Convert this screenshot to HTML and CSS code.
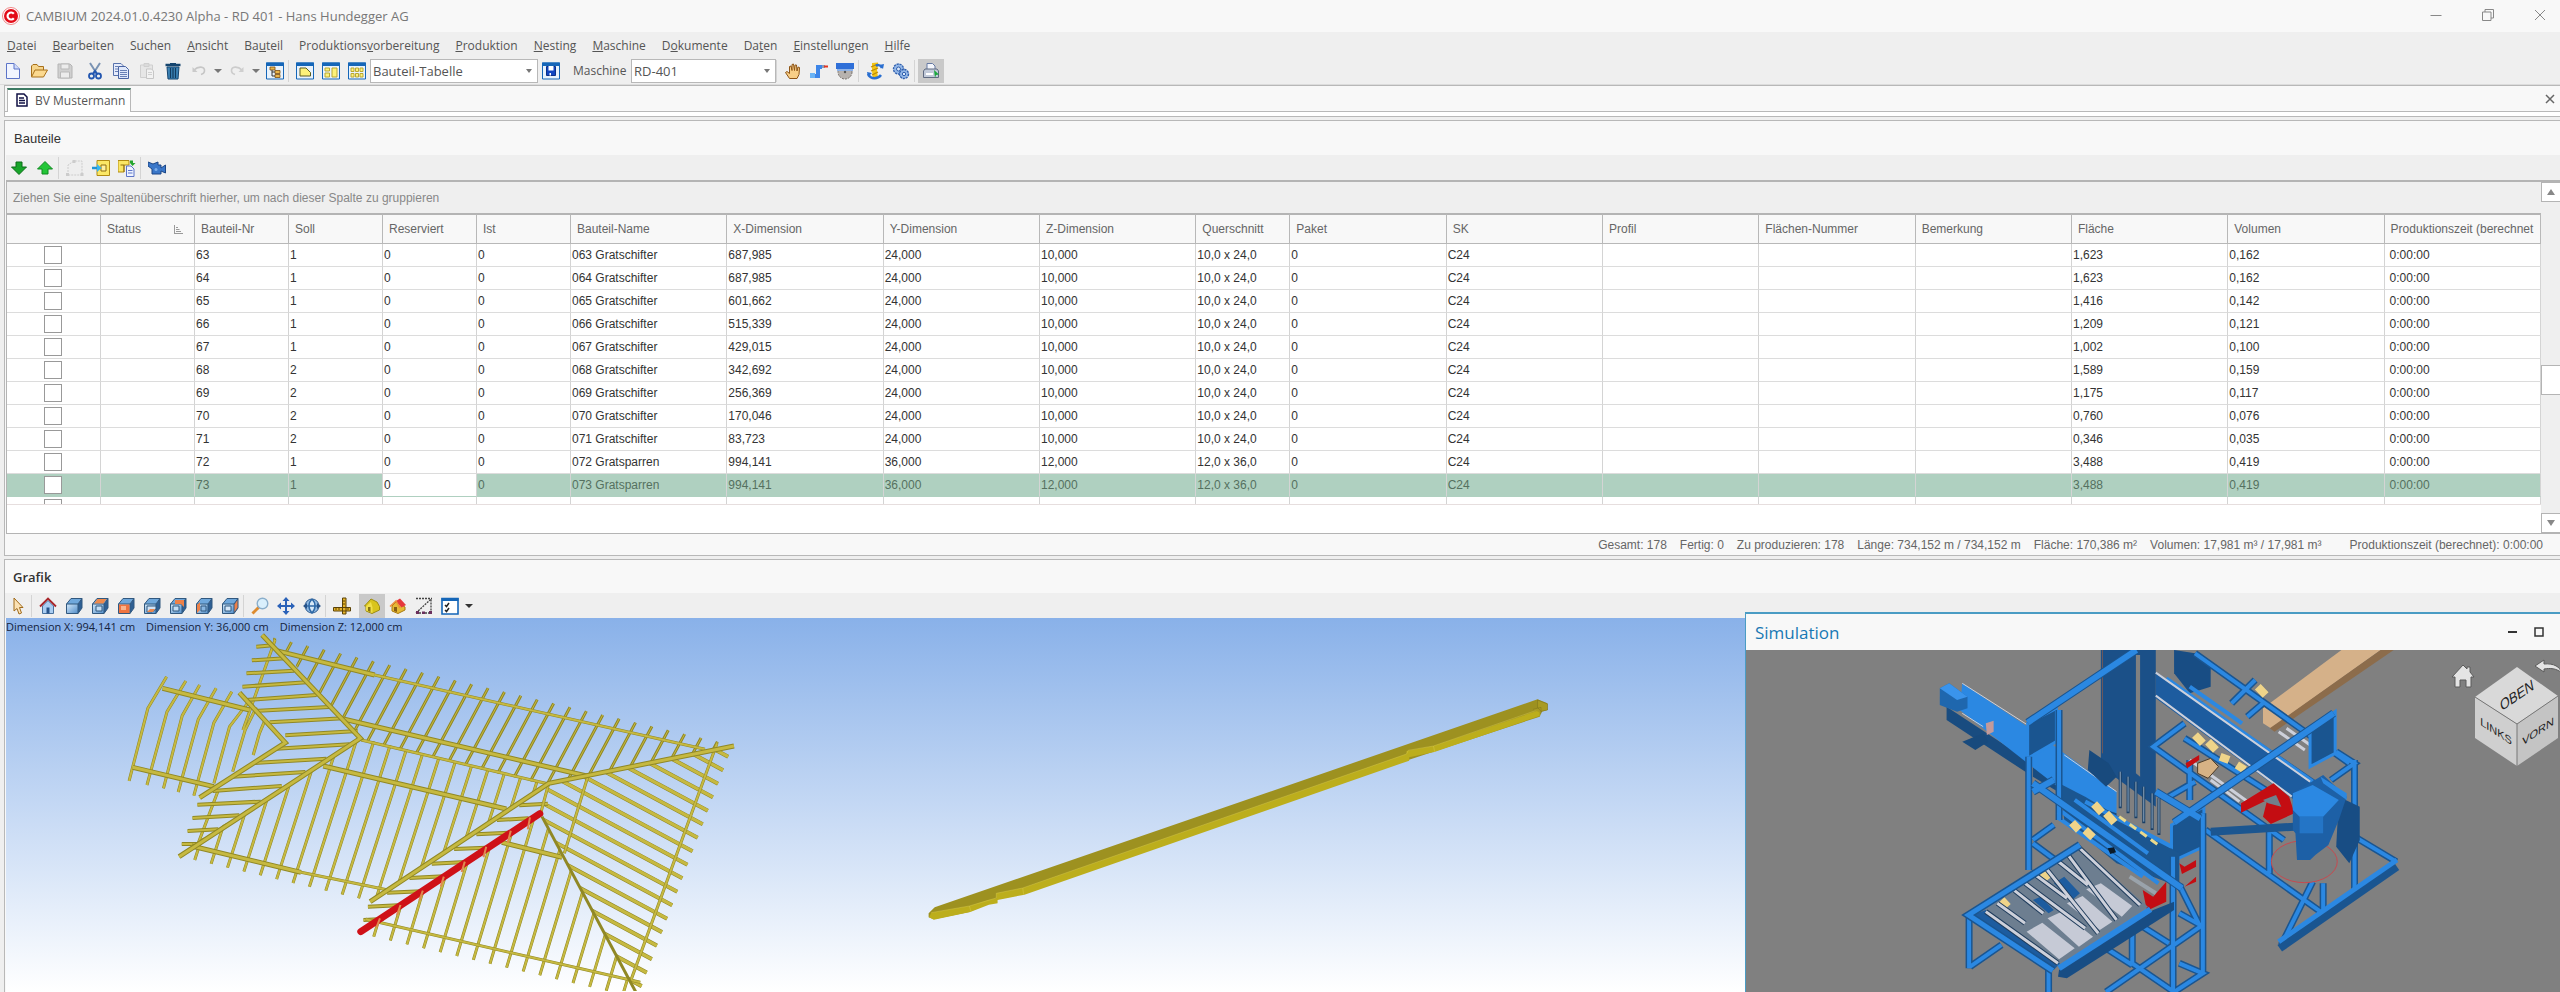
FILE: index.html
```html
<!DOCTYPE html>
<html lang="de">
<head>
  <meta charset="UTF-8" />
  <meta name="viewport" content="width=device-width, initial-scale=1.0"/>
  <title>CAMBIUM 2024.01.0.4230 Alpha - RD 401 - Hans Hundegger AG</title>
  <link rel="stylesheet" href="styles.css">
</head>
<body>
  <!-- shared icon shapes -->
  <svg class="defs" width="0" height="0" aria-hidden="true">
    <defs>
      <linearGradient id="steel" x1="0" y1="0" x2="1" y2="1"><stop offset="0" stop-color="#d4e9fa"/><stop offset="1" stop-color="#4f8cc9"/></linearGradient>
      <symbol id="cube" viewBox="0 0 18 18">
        <path d="M1.5 7 6 1.5H17L13 7z" fill="#6fa8dc"/>
        <path d="M13 7 17 1.5V11L13 16.5z" fill="#2e5f93"/>
        <path d="M1.5 7H13V16.5H1.5z" fill="url(#steel)"/>
        <path d="M1.5 7 6 1.5H17V11L13 16.5H1.5zM1.5 7H13V16.5M13 7 17 1.5" fill="none" stroke="#31587f"/>
      </symbol>
      <symbol id="win" viewBox="0 0 18 18">
        <path d="M.5 1H17.5V17H.5z" fill="#e9f3fc" stroke="#1566b8"/>
        <path d="M0 .5H18V4H0z" fill="#1566b8"/>
      </symbol>
      <symbol id="page" viewBox="0 0 18 18">
        <path d="M2.500 1.500H10L15.500 7V16.500H2.500z" fill="#f1f5ff" stroke="#5c74c8"/>
        <path d="M10 1.500V7H15.500" fill="#cfdafa" stroke="#5c74c8"/>
      </symbol>
    </defs>
  </svg>

  <div class="app">
    <header class="titlebar">
      <svg class="logo" viewBox="0 0 18 18"><circle cx="9" cy="9" r="8.500" fill="#fff" stroke="#e88"/><circle cx="9" cy="9" r="7" fill="#e30b17"/><path d="M11.800 6.800A3.500 3.500 0 1 0 11.800 11.200" fill="none" stroke="#fff" stroke-width="2.200"/></svg>
      <h1 class="app-title">CAMBIUM 2024.01.0.4230 Alpha - RD 401 - Hans Hundegger AG</h1>
      <div class="window-buttons">
        <button aria-label="Minimieren"><svg viewBox="0 0 12 12"><path d="M.5 6.500H11.500"/></svg></button>
        <button aria-label="Verkleinern"><svg viewBox="0 0 12 12"><path d="M.5 3H9V11.500H.5zM3 3V.5H11.500V9H9"/></svg></button>
        <button aria-label="Schließen"><svg viewBox="0 0 12 12"><path d="M1 1 11 11M11 1 1 11"/></svg></button>
      </div>
    </header>

    <nav class="menubar">
      <button><u>D</u>atei</button>
      <button><u>B</u>earbeiten</button>
      <button>Suchen</button>
      <button><u>A</u>nsicht</button>
      <button>Ba<u>u</u>teil</button>
      <button>Produktions<u>v</u>orbereitung</button>
      <button><u>P</u>roduktion</button>
      <button><u>N</u>esting</button>
      <button><u>M</u>aschine</button>
      <button>D<u>o</u>kumente</button>
      <button>Da<u>t</u>en</button>
      <button><u>E</u>instellungen</button>
      <button><u>H</u>ilfe</button>
    </nav>

    <div class="toolbar main-toolbar">
      <button class="tool" aria-label="Neu"><svg viewBox="0 0 18 18"><use href="#page"/></svg></button>
      <button class="tool" aria-label="Öffnen"><svg viewBox="0 0 18 18"><path d="M1.500 14.500V4L3 2.500H7L8.500 4.500H13.500V8" fill="#f6d58c" stroke="#a8701a"/><path d="M1.500 15 5 8H17.500L13.500 15z" fill="#fbd98f" stroke="#a8701a"/></svg></button>
      <button class="tool" aria-label="Speichern"><svg viewBox="0 0 18 18"><path d="M2 2H14L16 4V16H2z" fill="#d0d0d0" stroke="#b4b4b4"/><path d="M5 2H13V7H5zM4.500 10H13.500V16H4.500z" fill="#ececec" stroke="#b9b9b9"/></svg></button>
      <span class="sep"></span>
      <button class="tool" aria-label="Ausschneiden"><svg viewBox="0 0 18 18"><path d="M4 1 11 12M14 1 7 12" stroke="#7a93b3" stroke-width="2" fill="none"/><circle cx="5.500" cy="14" r="2.500" fill="none" stroke="#2256b0" stroke-width="1.800"/><circle cx="12.500" cy="14" r="2.500" fill="none" stroke="#2256b0" stroke-width="1.800"/><path d="M7 12 9 9 11 12" stroke="#2256b0" stroke-width="2" fill="none"/></svg></button>
      <button class="tool" aria-label="Kopieren"><svg viewBox="0 0 18 18"><path d="M1.500 1.500H9L12 4.500V13.500H1.500z" fill="#e6ecfb" stroke="#5873ad"/><path d="M6.500 4.500H13.500L16.500 7.500V16.500H6.500z" fill="#dfe8fb" stroke="#4964a3"/><path d="M3 4.500H6M3 7H6M3 9.500H6M8 8.500H15M8 10.500H15M8 12.500H15M8 14.500H15" stroke="#6880b5"/></svg></button>
      <button class="tool" aria-label="Einfügen"><svg viewBox="0 0 18 18"><path d="M2.500 3H14.500V15.500H2.500zM6 1.500H11V4.500H6z" fill="#e6e6e6" stroke="#cfcfcf"/><path d="M8.500 7H13.500L15.500 9V16.500H8.500z" fill="#f2f2f2" stroke="#c6c6c6"/><path d="M10 10.500H14M10 12.500H14" stroke="#d0d0d0"/></svg></button>
      <button class="tool" aria-label="Löschen"><svg viewBox="0 0 18 18"><path d="M1.500 3H16.500" stroke="#15456f" stroke-width="2.500"/><path d="M6 1.500H12" stroke="#15456f"/><path d="M3 5H15L14 17H4z" fill="#3c83b6" stroke="#15456f"/><path d="M6.500 6V16M9 6V16M11.500 6V16" stroke="#123a5d" stroke-width="1.200"/></svg></button>
      <button class="tool" aria-label="Rückgängig"><svg viewBox="0 0 18 18"><path d="M4 8C8 4 15 4 14.500 9C14.300 11 13 12 11 12.500" fill="none" stroke="#c6c6c6" stroke-width="1.600"/><path d="M2.500 5V10H7.500z" fill="#cacaca"/></svg></button>
      <button class="drop" aria-label="Rückgängig Liste"></button>
      <button class="tool" aria-label="Wiederholen"><svg viewBox="0 0 18 18"><path d="M14 8C10 4 3 4 3.500 9C3.700 11 5 12 7 12.500" fill="none" stroke="#cccccc" stroke-width="1.600"/><path d="M15.500 5V10H10.500z" fill="#cfcfcf"/></svg></button>
      <button class="drop" aria-label="Wiederholen Liste"></button>
      <button class="tool" aria-label="Baumansicht"><svg viewBox="0 0 18 18"><use href="#win"/><path d="M4 5H9V8H4zM9 8.500H14V11.500H9zM9 12.500H14V15.500H9z" fill="#e8b64c" stroke="#7a4d13" stroke-width=".8"/><path d="M6 8V14H9M6 10H9" fill="none" stroke="#333"/></svg></button>
      <span class="sep line"></span>
      <button class="tool" aria-label="Einzelansicht"><svg viewBox="0 0 18 18"><use href="#win"/><path d="M4 6H10L14.500 10.500V14H4z" fill="#fdf27a" stroke="#5d5d20"/></svg></button>
      <button class="tool" aria-label="Spaltenansicht"><svg viewBox="0 0 18 18"><use href="#win"/><path d="M3 6H7.500V9H3zM3 11H7.500V15H3zM10 6H15V15H10z" fill="#fdf27a" stroke="#b9a632"/></svg></button>
      <button class="tool" aria-label="Kachelansicht"><svg viewBox="0 0 18 18"><use href="#win"/><path d="M3 6H6V9.500H3zM7.500 6H10.500V9.500H7.500zM12 6H15V9.500H12zM3 11.500H6V15H3zM7.500 11.500H10.500V15H7.500zM12 11.500H15V15H12z" fill="#fdf27a" stroke="#b9a632"/></svg></button>
      <span class="combo combo-view"><select aria-label="Ansicht"><option>Bauteil-Tabelle</option></select></span>
      <button class="tool" aria-label="Ansicht speichern"><svg viewBox="0 0 18 18"><use href="#win"/><path d="M4.500 4.500H13.500V13.500H4.500z" fill="#1246c0" stroke="#0c2f86"/><path d="M6.500 4H11.500V8.500H6.500zM7.500 11H9V13.500H7.500z" fill="#fff"/></svg></button>
      <label class="tool-label" for="machine">Maschine</label>
      <span class="combo combo-machine"><select id="machine"><option>RD-401</option></select></span>
      <span class="sep line"></span>
      <button class="tool" aria-label="Hand"><svg viewBox="0 0 18 18"><path d="M5.500 16.500 1.500 10.500 3 9.500 5.500 11.500V4.500L7 4 8 8.500V2.500L9.500 2 10.500 8.500 11 3 12.500 3 13 9 14 5 15.500 5.500 15 12.500 13 16.500z" fill="#f8ce86" stroke="#8e5414"/></svg></button>
      <button class="tool" aria-label="Bearbeitung"><svg viewBox="0 0 18 18"><path d="M6 3H12V7H10V16H4V12H6z" fill="#3d85e8"/><path d="M0 11H5V16H0z" fill="#6ab3f5"/><path d="M12 3H15V6H12z" fill="#8b9bb5"/><path d="M14 4.500H18" stroke="#e5341f" stroke-width="2"/></svg></button>
      <button class="tool" aria-label="Säge"><svg viewBox="0 0 18 18"><circle cx="9" cy="10" r="7" fill="#b7b2ae" stroke="#77716c" stroke-dasharray="2 1"/><path d="M0 1H18V7H0z" fill="#2f6fd8"/><path d="M1 7H17V9H1z" fill="#8fb3e8"/><circle cx="9" cy="10" r="1.200" fill="#555"/></svg></button>
      <span class="sep line"></span>
      <button class="tool" aria-label="Bohrer"><svg viewBox="0 0 18 18"><path d="M6 1 12 .5 11 9 12 15 7 17 6 9z" fill="#f3c414"/><path d="M5 5 12 2M5 9 12 6M6 13 12 10" stroke="#b98b08" stroke-width="1.300"/><path d="M2 12C5 18 12 17 15 13M16 6C14 2 11 3 10 4" fill="none" stroke="#2a6fd0" stroke-width="2.500"/><path d="M13 3 18 2 17 7zM1 10 6 11 2 15z" fill="#2a6fd0"/></svg></button>
      <button class="tool" aria-label="Zahnräder"><svg viewBox="0 0 18 18"><g fill="#94b8e8" stroke="#2f5fae" stroke-width="1.400"><circle cx="6.500" cy="7" r="5" stroke-dasharray="2.200 .8"/><circle cx="12" cy="12" r="4.500" stroke-dasharray="2.200 .8"/></g><circle cx="6.500" cy="7" r="2" fill="#dbe8f8" stroke="#2f5fae"/><circle cx="12" cy="12" r="1.700" fill="#dbe8f8" stroke="#2f5fae"/></svg></button>
      <span class="sep line"></span>
      <button class="tool active" aria-label="Drucken"><svg viewBox="0 0 18 18"><path d="M5 8V1.500H10.500L13 4V8z" fill="#f4f6fb" stroke="#6579a3"/><path d="M1.500 9 3 7H15L16.500 9V15.500H1.500z" fill="#c2cad9" stroke="#5f6a80"/><path d="M4 12H11" stroke="#fff" stroke-width="2"/><path d="M12 8 17 12.500 14 13 13 16z" fill="#1aa83c"/></svg></button>
    </div>

    <div class="tabs">
      <button class="tab"><svg viewBox="0 0 12 14"><path d="M1 1H8L11 4V13H1z" fill="#fff" stroke="#111144" stroke-width="1.500"/><path d="M3 5H8M3 7.500H9M3 10H9" stroke="#111144" stroke-width="1.300"/></svg>BV Mustermann</button>
      <button class="tab-close" aria-label="Tab schließen"><svg viewBox="0 0 10 10"><path d="M1 1 9 9M9 1 1 9"/></svg></button>
    </div>

    <section class="panel parts">
      <h2 class="panel-title">Bauteile</h2>
      <div class="toolbar">
        <button class="tool" aria-label="Nach unten"><svg viewBox="0 0 18 18"><path d="M6 3H12V8H16.500L9 15.500 1.500 8H6z" fill="#18a52a" stroke="#0b6d18"/></svg></button>
        <button class="tool" aria-label="Nach oben"><svg viewBox="0 0 18 18"><path d="M6 15H12V10H16.500L9 2.500 1.500 10H6z" fill="#23c637" stroke="#0f8a20"/></svg></button>
        <span class="sep line"></span>
        <button class="tool" aria-label="Kontur"><svg viewBox="0 0 18 18"><path d="M2 16V6L8 2H16V16z" fill="#eee" stroke="#ccc" stroke-dasharray="2 1"/><path d="M0 14H3V17H0zM14.500 14H17.500V17H14.500zM6.500 1H9.500V4H6.500z" fill="#ccc"/></svg></button>
        <button class="tool" aria-label="Einfügen in Liste"><svg viewBox="0 0 18 18"><path d="M5 1.500H17.500V16.500H5z" fill="#fbe765" stroke="#b18b12"/><path d="M9 6H14V12H9z" fill="#fff1a0" stroke="#8d6d10"/><path d="M0 9H6" stroke="#1f93d6" stroke-width="2.500"/><path d="M5 5 9.500 9 5 13z" fill="#38b5ef"/></svg></button>
        <button class="tool" aria-label="Übertragen"><svg viewBox="0 0 18 18"><path d="M0 1.500H11V6H6V13H0z" fill="#fbe765" stroke="#b18b12"/><path d="M2.500 6H6V13" fill="none" stroke="#8d6d10"/><path d="M8.500 7H13L16 10V17.500H8.500z" fill="#eef3ff" stroke="#5c74c8"/><path d="M10 11.500H14.500M10 14H14.500" stroke="#5c74c8"/><path d="M12 1.500H15V4H17.500L14.500 7 12 4z" fill="#24a52f"/></svg></button>
        <span class="sep line"></span>
        <button class="tool" aria-label="Kamera"><svg viewBox="0 0 18 18"><path d="M0 3 5 5 10 3V6H13V9L17.500 6V14L13 12V15H4V10L0 7z" fill="#3a77c9" stroke="#1c4787"/><circle cx="8" cy="10.500" r="1.500" fill="#7badea"/></svg></button>
      </div>

      <div class="grid">
        <div class="grid-main">
          <div class="group-hint">Ziehen Sie eine Spaltenüberschrift hierher, um nach dieser Spalte zu gruppieren</div>
          <div class="grid-clip">
            <table>
              <colgroup>
                <col class="narrow" span="6"><col span="4"><col class="narrow"><col span="8">
              </colgroup>
              <thead>
                <tr>
                  <th></th>
                  <th><span class="sorted">Status <svg viewBox="0 0 9 9"><path d="M.5 0V8.500M0 8.500H9M2 6.500H7M2 4.500H5.500M2 2.500H4"/></svg></span></th>
                  <th>Bauteil-Nr</th><th>Soll</th><th>Reserviert</th><th>Ist</th><th>Bauteil-Name</th><th>X-Dimension</th><th>Y-Dimension</th><th>Z-Dimension</th><th>Querschnitt</th><th>Paket</th><th>SK</th><th>Profil</th><th>Flächen-Nummer</th><th>Bemerkung</th><th>Fläche</th><th>Volumen</th><th>Produktionszeit (berechnet</th>
                </tr>
              </thead>
              <tbody>
                <tr><td class="check"><input type="checkbox" aria-label="Bauteil 63"></td><td></td><td>63</td><td>1</td><td>0</td><td>0</td><td>063 Gratschifter</td><td>687,985</td><td>24,000</td><td>10,000</td><td>10,0 x 24,0</td><td>0</td><td>C24</td><td></td><td></td><td></td><td>1,623</td><td>0,162</td><td class="time">0:00:00</td></tr>
                <tr><td class="check"><input type="checkbox" aria-label="Bauteil 64"></td><td></td><td>64</td><td>1</td><td>0</td><td>0</td><td>064 Gratschifter</td><td>687,985</td><td>24,000</td><td>10,000</td><td>10,0 x 24,0</td><td>0</td><td>C24</td><td></td><td></td><td></td><td>1,623</td><td>0,162</td><td class="time">0:00:00</td></tr>
                <tr><td class="check"><input type="checkbox" aria-label="Bauteil 65"></td><td></td><td>65</td><td>1</td><td>0</td><td>0</td><td>065 Gratschifter</td><td>601,662</td><td>24,000</td><td>10,000</td><td>10,0 x 24,0</td><td>0</td><td>C24</td><td></td><td></td><td></td><td>1,416</td><td>0,142</td><td class="time">0:00:00</td></tr>
                <tr><td class="check"><input type="checkbox" aria-label="Bauteil 66"></td><td></td><td>66</td><td>1</td><td>0</td><td>0</td><td>066 Gratschifter</td><td>515,339</td><td>24,000</td><td>10,000</td><td>10,0 x 24,0</td><td>0</td><td>C24</td><td></td><td></td><td></td><td>1,209</td><td>0,121</td><td class="time">0:00:00</td></tr>
                <tr><td class="check"><input type="checkbox" aria-label="Bauteil 67"></td><td></td><td>67</td><td>1</td><td>0</td><td>0</td><td>067 Gratschifter</td><td>429,015</td><td>24,000</td><td>10,000</td><td>10,0 x 24,0</td><td>0</td><td>C24</td><td></td><td></td><td></td><td>1,002</td><td>0,100</td><td class="time">0:00:00</td></tr>
                <tr><td class="check"><input type="checkbox" aria-label="Bauteil 68"></td><td></td><td>68</td><td>2</td><td>0</td><td>0</td><td>068 Gratschifter</td><td>342,692</td><td>24,000</td><td>10,000</td><td>10,0 x 24,0</td><td>0</td><td>C24</td><td></td><td></td><td></td><td>1,589</td><td>0,159</td><td class="time">0:00:00</td></tr>
                <tr><td class="check"><input type="checkbox" aria-label="Bauteil 69"></td><td></td><td>69</td><td>2</td><td>0</td><td>0</td><td>069 Gratschifter</td><td>256,369</td><td>24,000</td><td>10,000</td><td>10,0 x 24,0</td><td>0</td><td>C24</td><td></td><td></td><td></td><td>1,175</td><td>0,117</td><td class="time">0:00:00</td></tr>
                <tr><td class="check"><input type="checkbox" aria-label="Bauteil 70"></td><td></td><td>70</td><td>2</td><td>0</td><td>0</td><td>070 Gratschifter</td><td>170,046</td><td>24,000</td><td>10,000</td><td>10,0 x 24,0</td><td>0</td><td>C24</td><td></td><td></td><td></td><td>0,760</td><td>0,076</td><td class="time">0:00:00</td></tr>
                <tr><td class="check"><input type="checkbox" aria-label="Bauteil 71"></td><td></td><td>71</td><td>2</td><td>0</td><td>0</td><td>071 Gratschifter</td><td>83,723</td><td>24,000</td><td>10,000</td><td>10,0 x 24,0</td><td>0</td><td>C24</td><td></td><td></td><td></td><td>0,346</td><td>0,035</td><td class="time">0:00:00</td></tr>
                <tr><td class="check"><input type="checkbox" aria-label="Bauteil 72"></td><td></td><td>72</td><td>1</td><td>0</td><td>0</td><td>072 Gratsparren</td><td>994,141</td><td>36,000</td><td>12,000</td><td>12,0 x 36,0</td><td>0</td><td>C24</td><td></td><td></td><td></td><td>3,488</td><td>0,419</td><td class="time">0:00:00</td></tr>
                <tr class="selected"><td class="check"><input type="checkbox" aria-label="Bauteil 73"></td><td></td><td>73</td><td>1</td><td class="focus">0</td><td>0</td><td>073 Gratsparren</td><td>994,141</td><td>36,000</td><td>12,000</td><td>12,0 x 36,0</td><td>0</td><td>C24</td><td></td><td></td><td></td><td>3,488</td><td>0,419</td><td class="time">0:00:00</td></tr>
                <tr><td class="check"><input type="checkbox" aria-label="Bauteil 74"></td><td></td><td></td><td></td><td></td><td></td><td></td><td></td><td></td><td></td><td></td><td></td><td></td><td></td><td></td><td></td><td></td><td></td><td></td></tr>
              </tbody>
            </table>
          </div>
        </div>
        <div class="scrollbar">
          <button class="scroll-up" aria-label="Nach oben blättern"></button>
          <div class="thumb"></div>
          <button class="scroll-down" aria-label="Nach unten blättern"></button>
        </div>
      </div>

      <footer class="totals">
        <span>Gesamt: 178</span>
        <span>Fertig: 0</span>
        <span>Zu produzieren: 178</span>
        <span>Länge: 734,152 m / 734,152 m</span>
        <span>Fläche: 170,386 m²</span>
        <span>Volumen: 17,981 m³ / 17,981 m³</span>
        <span class="total-time">Produktionszeit (berechnet): 0:00:00</span>
      </footer>
    </section>

    <section class="panel graphics">
      <h2 class="panel-title bold">Grafik</h2>
      <div class="toolbar">
        <button class="tool" aria-label="Auswahl"><svg viewBox="0 0 18 18"><path d="M5 1V14L8 11.500 10 17 12.500 16 10.500 10.500H14z" fill="#fbe2b5" stroke="#a06a1a"/></svg></button>
        <span class="sep line"></span>
        <button class="tool" aria-label="Startansicht"><svg viewBox="0 0 18 18"><path d="M3.500 9 9 3.500 14.500 9V16.500H3.500z" fill="#a9cdf2" stroke="#47709d"/><path d="M1 9.500 9 1.500 17 9.500" fill="none" stroke="#a8262b" stroke-width="1.800"/><path d="M7.500 10.500H10.500V16.500H7.500z" fill="#27538a"/></svg></button>
        <button class="tool" aria-label="Isometrie"><svg viewBox="0 0 18 18"><use href="#cube"/></svg></button>
        <button class="tool" aria-label="Oben"><svg viewBox="0 0 18 18"><use href="#cube"/><path d="M3 6.500 6.500 2H15.500L12.500 6.500z" fill="#ef8a4c"/><path d="M5 9H11V14H5z" fill="#c5def5" stroke="#31587f"/></svg></button>
        <button class="tool" aria-label="Vorne"><svg viewBox="0 0 18 18"><use href="#cube"/><path d="M2 7.500H12.500V16H2z" fill="#ef7440"/><path d="M4 9H9V13H4z" fill="#f8b48e"/></svg></button>
        <button class="tool" aria-label="Unten"><svg viewBox="0 0 18 18"><use href="#cube"/><path d="M4 9H13V12L9 15H4z" fill="#cfe3f7" stroke="#31587f"/><path d="M4 15 7 12H12L10 15z" fill="#e98850"/></svg></button>
        <button class="tool" aria-label="Hinten"><svg viewBox="0 0 18 18"><use href="#cube"/><path d="M6 3H15V10L12 7H6z" fill="#ee8148"/><path d="M4 9H10V14H4z" fill="#c5def5" stroke="#31587f"/></svg></button>
        <button class="tool" aria-label="Links"><svg viewBox="0 0 18 18"><use href="#cube"/><path d="M2 8 5 5V13L2 16z" fill="#ee8148"/><path d="M6 9H11V14H6z" fill="#89b7e2" stroke="#31587f"/></svg></button>
        <button class="tool" aria-label="Rechts"><svg viewBox="0 0 18 18"><use href="#cube"/><path d="M13.500 7.500 16.500 3V10.500L13.500 15z" fill="#ee8148"/><path d="M4 9H10V14H4z" fill="#d5e7f8" stroke="#31587f"/></svg></button>
        <span class="sep line"></span>
        <button class="tool" aria-label="Zoom"><svg viewBox="0 0 18 18"><path d="M8 10 1.500 16.500" stroke="#dd8b2f" stroke-width="3"/><circle cx="11.500" cy="6.500" r="5.300" fill="#d9effc" stroke="#8aaecb" stroke-width="1.400"/></svg></button>
        <button class="tool" aria-label="Verschieben"><svg viewBox="0 0 18 18"><path d="M9 2V16M2 9H16" stroke="#2b62b8" stroke-width="2"/><path d="M9 0 12.500 4H5.500zM9 18 12.500 14H5.500zM0 9 4 5.500V12.500zM18 9 14 5.500V12.500z" fill="#2b62b8"/></svg></button>
        <button class="tool" aria-label="Drehen"><svg viewBox="0 0 18 18"><circle cx="9" cy="9" r="7" fill="#8fb8e0" stroke="#2f5d92"/><path d="M9 2C5 6 5 12 9 16C13 12 13 6 9 2M2 9H16" fill="#d8e9f7" stroke="#2f6aa8" stroke-width="1.500"/><path d="M0 9 4 6V12zM18 9 14 6V12z" fill="#27538a"/></svg></button>
        <span class="sep line"></span>
        <button class="tool" aria-label="Messen"><svg viewBox="0 0 18 18"><path d="M9.500 1H13V17H9.500zM.5 10.500H17.500V14H.5z" fill="#e7b529" stroke="#5a4208"/><path d="M3 11V13M6 11V13M15 11V13M10 4H12M10 7H12" stroke="#5a4208"/></svg></button>
        <span class="sep"></span>
        <button class="tool active" aria-label="Bauteil anzeigen"><svg viewBox="0 0 18 18"><path d="M1.500 9 8 2 14 5 16.500 9.500V13L9 16.500 3 14V9z" fill="#d9c41c" stroke="#9d8c12"/><path d="M3 9.500 8 5 9.500 10.500V16L3 13.500z" fill="#f0df49"/><path d="M5 10H7.500V15L5 14z" fill="#857312"/></svg></button>
        <button class="tool" aria-label="Dach anzeigen"><svg viewBox="0 0 18 18"><path d="M3 9 7 5 16 10V13L9 16.500 3 14z" fill="#e5ba35" stroke="#a97b12"/><path d="M7 4 11 1.500 17 8 12.500 10.500z" fill="#e5383c"/><path d="M1 9.500 7 4 11 11" fill="none" stroke="#ef8f3b" stroke-width="1.500"/><path d="M5 10H8V15L5 14z" fill="#865d12"/></svg></button>
        <button class="tool" aria-label="Punkte"><svg viewBox="0 0 18 18"><path d="M1 1.500H17M1 16H17M1 16 16 2V16" fill="none" stroke="#444" stroke-width="1.300" stroke-dasharray="2 1"/><path d="M1 14H4V17H1zM14 14H17V17H14zM7 14.500H10V17H7z" fill="#6b2f5c"/></svg></button>
        <button class="tool" aria-label="Optionen"><svg viewBox="0 0 18 18"><path d="M1 1.500H17V17H1z" fill="#fff" stroke="#1566b8" stroke-width="1.600"/><path d="M.5 1H17.500V4H.5z" fill="#1566b8"/><path d="M4 8 5.500 9.500 8 6M4 13 5.500 14.500 8 11" fill="none" stroke="#222" stroke-width="1.500"/></svg></button>
        <button class="drop dark-drop" aria-label="Weitere Optionen"></button>
      </div>

      <div class="viewer">
        <p class="dimensions"><span>Dimension X: 994,141 cm</span><span>Dimension Y: 36,000 cm</span><span>Dimension Z: 12,000 cm</span></p>
        <svg class="scene" viewBox="0 0 2554 373" preserveAspectRatio="xMinYMin meet">
          <defs>
            <clipPath id="north"><path d="M408 20 1500 330 1465 378 1135 468 1045 495 628 360z"/></clipPath>
            <clipPath id="south"><path d="M560 410 628 355 1045 490 650 845 640 870 200 760 222 700z"/></clipPath>
            <clipPath id="dormer"><path d="M627 937 1032 578 1245 1116H627z"/></clipPath>
            <clipPath id="east"><path d="M1465 378 1050 492 1035 590 1245 1116H1500V378z"/></clipPath>
            <path id="jacks" d="M395 80 432 76M385 121 460 115M373 160 480 152M364 200 507 187M372 240 530 225M390 273 558 261M425 307 590 295M460 346 622 333M440 386 604 373M390 429 552 416M342 470 505 456M297 513 452 498M263 554 405 545M252 594 357 586M241 633 310 628M228 672 268 672M635 900 680 897M645 860 712 856M688 818 765 814M738 774 815 769M788 731 865 726M838 687 910 683M888 643 960 638M934 600 1005 595M984 556 1048 551"/>
            <path id="small" d="M194 170 152 265 110 483M237 183 195 275 150 495M268 195 229 287 187 505M305 205 265 298 220 516M340 215 300 308 255 527M378 245 335 320 300 490M395 262 370 330 342 455M413 305 402 340 388 405M437 60 365 330M310 510 262 680"/>
            <path id="thin" d="M660 165 1400 388M630 360 1050 492M495 757 690 810M640 898 1255 1087M1427 370 1233 1085M1138 468 1085 700M1050 490 1030 590"/>
            <path id="thick" d="M440 92 660 165M590 297 1135 468M545 438 955 567M250 678 495 757M185 205 380 270M118 442 300 500M945 667 1080 712"/>
            <path id="hips" d="M408 45 628 355 222 710M357 218 460 368 268 533M1465 378 1050 490 650 845"/>
          </defs>
          <g class="roof" transform="translate(74 2) scale(.4464 .3333)">
            <g id="rafters"></g>
            <use href="#small" class="dark w3"/><use href="#small" class="light w2"/>
            <use href="#jacks" class="dark w4"/><use href="#jacks" class="light w2"/>
            <use href="#thin" class="dark w3"/><use href="#thin" class="light w2"/>
            <use href="#thick" class="dark w5"/><use href="#thick" class="light w3"/>
            <use href="#hips" class="dark w5"/><use href="#hips" class="light w3"/>
            <path class="dark w3" d="M1035 590 1245 1116"/>
            <path class="red" d="M1030 581 629 935"/>
            <path class="ticks w2" d="M1008 592 1003 628M965 632 958 668M910 680 904 712M862 725 855 756M815 770 808 800M768 812 760 842M718 855 710 885M672 895 664 922"/>
          </g>
          <g class="beam" transform="translate(894 52) scale(.4337 .3333)">
            <path fill="#9d9120" d="M66 730 80 712 1470 88 1493 100V120L1480 125 1475 140 1230 245 1172 270 285 672 225 688 160 726 78 748 66 742z"/>
            <path fill="#bcae1c" d="M72 728 160 708 203 690 222 685V670L283 654 1168 252V243L1230 228 1475 120V138L1232 246 1174 262V272L287 674 225 690V700L205 704 162 726 78 749 67 742z"/>
            <path fill="none" stroke="#ddd05a" d="M72 728 160 708 222 684V670L283 654 1168 252 1172 241 1230 228 1470 120M160 708 164 726M283 654 285 674M1230 228 1233 246"/>
            <path fill="#a99b22" stroke="#6f661a" d="M1470 90 1493 102V120L1478 124 1470 112zM1460 118 1478 112V130"/>
          </g>
        </svg>
      </div>

      <div class="simulation">
        <div class="sim-title">
          <h2>Simulation</h2>
          <button aria-label="Simulation minimieren"><svg viewBox="0 0 10 10"><path d="M0 5H9" stroke-width="2"/></svg></button>
          <button aria-label="Simulation maximieren"><svg viewBox="0 0 10 10"><path d="M1 1H9V9H1z" stroke-width="1.500"/></svg></button>
        </div>
        <svg class="sim-view" viewBox="0 0 814 342" preserveAspectRatio="xMinYMin meet">
          <defs>
            <path id="back-frame" d="M870 160 1165 490M850 370 790 440 1040 720M850 415 1010 575M860 480V600M820 590 870 545M940 310 985 240M970 350 1000 310M890 690 1110 935M1175 480V870M1140 455 1175 490 1130 540M1012 690V820M1115 850V930M1180 715 1255 785M1035 1035 1095 845"/>
            <path id="posts" d="M552 470V810M610 330V660M560 720 600 675M560 730 620 800M885 640V1120M828 770V1176M438 945V1105M440 1100 500 1035M590 1110V1176M750 980V1090M840 855 880 980 700 1176M840 940 880 975M750 1090 830 1176M840 1090 885 1120 830 1176M700 1045 750 1095M770 980 820 1030"/>
            <path id="arches" d="M550 368 758 150M830 668 1135 340M560 550 845 865M600 540 560 575M795 575 880 655"/>
            <path id="table-frame" d="M650 735 437 945 598 1112"/>
            <path id="rollers" d="M470 935 608 1090M492 910 545 970M525 872 580 940M545 850 660 985M565 825 625 895M585 805 685 1000M605 780 665 855M625 760 720 960M645 738 765 915"/>
          </defs>
          <g class="machine" transform="translate(-6 -50) scale(.523 .3333)">
            <!-- timber -->
            <path fill="#d5b189" d="M1150 150H1225L1015 385 1000 370V325z"/>
            <path fill="#8c6c4b" d="M1225 150H1250L1022 395 1013 385z"/>
            <!-- tower -->
            <path fill="#1b5088" d="M690 150H795V620L690 500z"/>
            <path fill="#808080" d="M757 165H765V530L757 520z"/>
            <path fill="none" stroke="#70585a" stroke-width="1" d="M693 150V460"/>
            <!-- infeed arm -->
            <path fill="#194c80" d="M395 320 550 480V520L395 360zM560 480 720 640V680L560 530z"/>
            <path fill="#2b88e2" d="M425 250 550 380 720 575V640L640 600 550 490 420 330z"/>
            <path class="silver w1" d="M425 250 550 375M620 465 720 575M425 340 465 380"/>
            <path fill="#1f67ae" d="M382 265 400 250 435 290V325L415 335 382 315z"/>
            <path fill="#3a94ec" d="M382 265 400 250 435 290 415 300z"/>
            <path fill="#184a7d" d="M425 425 465 400 475 425 450 450zM668 450 705 490 720 530 700 560 665 510z"/>
            <path fill="#c39a9a" d="M470 370 485 362V395L472 405z"/>
            <!-- rear portal -->
            <path fill="#184d84" d="M870 160 900 200V260L860 280 830 220V150z"/>
            <path fill="#1d5c9f" d="M795 215 1105 545 1060 600 795 295z"/>
            <path fill="none" stroke="#2b88e2" stroke-width="4" d="M815 235 1095 545M860 260 960 370"/>
            <use href="#back-frame" class="steel-dark w7"/><use href="#back-frame" class="steel w4"/>
            <path class="silver w2" d="M795 218 1090 545M795 287 1055 590"/>
            <path class="silver w3" d="M860 480 975 610M900 540 955 605M1030 395 1080 450M1045 385 1095 440"/>
            <path stroke="#1c5690" stroke-width="8" fill="none" d="M900 695 1060 680"/>
            <path class="steel-dark w8" d="M1032 1045 1256 800"/>
            <path class="steel w5" d="M1030 1025 1256 780"/>
            <path class="roller" d="M870 405 885 430M895 425 910 450M918 470 935 480M950 495 965 510M990 260 1005 285"/>
            <path fill="#d6b285" stroke="#4a3a28" d="M875 490 900 475 915 500 895 535 875 520z"/>
            <path fill="#1a5590" d="M1090 395 1138 335V460L1090 500z"/><path class="steel w3" d="M1090 395 1138 335V460L1090 500z"/>
            <!-- saw unit -->
            <path class="red-steel" d="M958 610 1020 550 1050 590 1060 640 1015 672 1000 650 1008 600 958 638zM852 490 878 465V480L855 505z"/>
            <path fill="#70808c" d="M1000 600 1025 585 1035 620 1010 610z"/>
            <ellipse cx="1079" cy="785" rx="63" ry="63" fill="#7d7d7d" stroke="#c64a50"/>
            <path fill="#184d84" d="M1145 590 1185 620V720L1165 790 1140 740z"/>
            <path fill="#1d60a6" d="M1057 580 1115 525 1160 590 1145 660 1125 735 1100 765 1090 780H1065L1062 700 1057 690z"/>
            <path fill="#2b88e2" d="M1057 580 1095 555 1145 600 1115 650H1070L1057 630zM1110 530 1160 580V600L1115 550z"/>
            <path fill="#2475c6" d="M1070 650H1115V700H1070z"/>
            <!-- front portal -->
            <path fill="#1a5590" d="M550 370 605 325V425L550 475zM825 675 887 620V740L825 785z"/>
            <path class="steel w3" d="M550 370 605 325V425L550 475zM825 675 887 620V740L825 785z"/>
            <path fill="#1b5690" d="M610 550 660 590 840 760V860L720 790 620 660z"/>
            <path fill="none" stroke="#2b88e2" stroke-width="4" d="M660 605 825 740M610 655 770 830M640 600 780 760M615 635 800 850"/>
            <use href="#posts" class="steel-dark w7"/><use href="#posts" class="steel w4"/>
            <use href="#arches" class="steel-dark w8"/><use href="#arches" class="steel w6"/>
            <path stroke="#193f66" stroke-width="3" fill="none" d="M727 515V625M742 530V640M757 545V655M772 560V670M788 580V690M801 595V705"/>
            <path stroke="#8fa7be" fill="none" d="M727 515V620M742 530V635M757 545V650M772 560V665M788 580V685M801 595V700"/>
            <path class="roller" d="M677 612 692 638M700 640 716 668M635 668 648 690M660 690 675 712"/>
            <path fill="none" stroke="#ead98c" stroke-width="3" stroke-dasharray="8 5" d="M725 650 800 735"/>
            <path class="red-steel" d="M770 870 790 890 815 845V905L778 932zM840 790 850 800 872 780V800L845 822zM850 860 872 830V845z"/>
            <path stroke="#9aa3ab" stroke-width="4" fill="none" d="M745 830 795 880"/>
            <path fill="#0b1a28" d="M703 745 715 742 719 757 708 762z"/>
            <!-- roller table -->
            <path fill="#6d7e90" d="M650 740 780 920 605 1100 445 945z"/>
            <path fill="#1d5c9f" d="M445 945 470 930 612 1090 600 1110zM560 900 575 890 600 930 590 940zM600 850 620 830 650 880 635 900z"/>
            <path class="roller" d="M500 900 512 920M578 815 590 838"/>
            <path fill="#c6cad6" d="M548 995 578 968 640 1045 610 1078zM588 955 615 935 675 1010 648 1040zM625 910 655 888 712 965 688 990zM662 868 690 850 750 918 730 950z"/>
            <use href="#rollers" class="roll-dark"/><use href="#rollers" class="silver w3"/>
            <use href="#table-frame" class="steel-dark w8"/><use href="#table-frame" class="steel w5"/>
            <path fill="#184d84" d="M610 1110 790 930 830 905V930L625 1135 608 1130z"/>
            <path class="steel w6" d="M610 1105 785 928"/>
          </g>
          <!-- view cube -->
          <g class="view-cube">
            <path fill="#d9d9d9" d="M771 17 812 46 771 74 729 47z"/>
            <path fill="#cfcfcf" d="M729 47 771 74V116L729 88z"/>
            <path fill="#c4c4c4" d="M812 46 771 74V116L812 88z"/>
            <path fill="none" stroke="#777" d="M729 47 771 74 812 46M771 74V116"/>
            <text class="top" transform="translate(771 46) rotate(-34) skewX(-22)" y="4">OBEN</text>
            <text transform="translate(750 81) skewY(33)" y="4">LINKS</text>
            <text transform="translate(792 81) skewY(-34)" y="4">VORN</text>
            <path class="view-icon" d="M717 15 706 27H709V37H714V30H720V37H725V27H728L724 22V17H721V19z"/>
            <path class="view-icon" d="M789 16 798 10V14C808 13 814 17 816 23C810 18 804 18 798 19V22z"/>
          </g>
        </svg>
      </div>
    </section>
  </div>

  <script src="roof.js"></script>
</body>
</html>
```
FILE: styles.css
```css
* {
  box-sizing: border-box;
}

body {
  margin: 0;
  background: #efefef;
  color: #555;
  font-family: 'Open Sans', 'Noto Sans', sans-serif;
  font-size: 12px;
}

button {
  border: none;
  padding: 0;
  background: none;
  color: inherit;
  font: inherit;
}

h1, h2, p {
  margin: 0;
  font-weight: normal;
}

.defs {
  position: absolute;
}

.app {
  display: flex;
  flex-direction: column;
  height: 100vh;
  overflow: hidden;
}

/* title bar */
.titlebar {
  display: flex;
  align-items: center;
  height: 32px;
  flex: none;
  padding-left: 2px;
  background: #f8f8f8;
}

.logo {
  width: 18px;
  height: 18px;
  margin-right: 6px;
}

.app-title {
  font-size: 13px;
  color: #777;
}

.window-buttons {
  display: flex;
  gap: 12px;
  margin-left: auto;
}

.window-buttons button {
  width: 40px;
  height: 32px;
}

.window-buttons svg {
  width: 12px;
  height: 12px;
  fill: none;
  stroke: #888;
}

/* menu and toolbars */
.menubar {
  display: flex;
  align-items: center;
  height: 27px;
  flex: none;
}

.menubar button {
  padding: 0 8px 1px;
}

.menubar button:first-child {
  padding-left: 7px;
}

.toolbar {
  display: flex;
  align-items: center;
  height: 25px;
  background: #efefef;
}

.main-toolbar {
  height: 26px;
  flex: none;
  padding-bottom: 2px;
  border-bottom: 1px solid #dcdcdc;
}

.tool {
  display: flex;
  align-items: center;
  justify-content: center;
  width: 26px;
  height: 24px;
}

.tool svg {
  width: 18px;
  height: 18px;
}

.tool.active {
  background: #c9c9c9;
}

.drop {
  width: 12px;
  height: 24px;
}

.drop::before {
  content: '';
  display: block;
  width: 0;
  margin: 0 auto;
  border: 4px solid transparent;
  border-top-color: #777;
  border-bottom: none;
}

.dark-drop::before {
  border-top-color: #333;
}

.sep {
  width: 4px;
  height: 22px;
}

.sep.line {
  border-left: 1px solid #d4d4d4;
}

.combo {
  position: relative;
  height: 24px;
}

.combo::after {
  content: '';
  position: absolute;
  right: 6px;
  top: 10px;
  border: 3px solid transparent;
  border-top: 4px solid #777;
  border-bottom: none;
  pointer-events: none;
}

.combo select {
  appearance: none;
  width: 100%;
  height: 24px;
  padding: 0 2px;
  border: 1px solid #b8b8b8;
  border-radius: 0;
  background: #fff;
  color: #555;
  font: inherit;
  font-size: 13px;
}

.combo-view {
  width: 168px;
}

.combo-machine {
  width: 145px;
}

.tool-label {
  width: 67px;
  padding-left: 9px;
}

/* document tabs */
.tabs {
  display: flex;
  align-items: flex-start;
  height: 32px;
  flex: none;
  margin-left: 4px;
  padding: 2px 0 0 2px;
  border-top: 1px solid #b8b8b8;
  border-left: 1px solid #b8b8b8;
  border-bottom: 1px solid #b8b8b8;
  background: linear-gradient(#f8f8f8 25px, #b8b8b8 25px, #b8b8b8 26px, #fff 26px);
}

.tab {
  display: flex;
  align-items: center;
  gap: 7px;
  height: 24px;
  padding: 0 5px 2px 8px;
  border-top: 2px solid #3d7a63;
  border-left: 1px solid #b8b8b8;
  border-right: 1px solid #b8b8b8;
  background: #fff;
}

.tab svg {
  width: 12px;
  height: 14px;
}

.tab-close {
  margin: 3px 5px 0 auto;
}

.tab-close svg {
  width: 10px;
  height: 10px;
  fill: none;
  stroke: #666;
  stroke-width: 1.5;
}

/* panels */
.panel {
  margin-left: 4px;
  border-top: 1px solid #b8b8b8;
  border-left: 1px solid #b8b8b8;
  background: #f8f8f8;
}

.parts {
  flex: none;
  margin-top: 3px;
  padding-left: 1px;
  border-bottom: 1px solid #b8b8b8;
}

.panel-title {
  height: 34px;
  padding-left: 8px;
  line-height: 36px;
  font-size: 13px;
  color: #333;
}

.parts .panel-title {
  font-family: 'Liberation Sans', Arial, sans-serif;
}

.graphics .panel-title {
  height: 33px;
  line-height: 34px;
  font-weight: 600;
}

/* part list */
.grid {
  display: flex;
  height: 354px;
  border-top: 2px solid #b4b4b4;
  border-bottom: 1px solid #b4b4b4;
  background: #fff;
  font-family: 'Liberation Sans', Arial, sans-serif;
  font-size: 12px;
  color: #333;
}

.grid-main {
  flex: 1;
  min-width: 0;
  border-left: 1px solid #b4b4b4;
}

.group-hint {
  height: 31px;
  padding-left: 6px;
  line-height: 32px;
  background: #efefef;
  color: #888;
}

.grid-clip {
  height: 292px;
  overflow: hidden;
  border-bottom: 1px solid #e6dede;
}

table {
  width: 100%;
  table-layout: fixed;
  border-collapse: separate;
  border-spacing: 0;
}

.narrow {
  width: 94px;
}

th {
  height: 31px;
  padding: 0 6px;
  border-top: 2px solid #b4b4b4;
  border-right: 1px solid #b8b8b8;
  border-bottom: 1px solid #b8b8b8;
  background: #f8f8f8;
  color: #666;
  font-weight: normal;
  text-align: left;
  white-space: nowrap;
  overflow: hidden;
}

.sorted {
  display: flex;
  align-items: center;
  justify-content: space-between;
}

.sorted svg {
  width: 9px;
  height: 9px;
  margin-right: 5px;
  fill: none;
  stroke: #999;
}

td {
  height: 23px;
  padding: 0 1px;
  border-right: 1px solid #d4d4d4;
  border-bottom: 1px solid #dcdcdc;
  white-space: nowrap;
}

.time {
  padding-left: 5px;
}

.check {
  padding-right: 3px;
  line-height: 0;
  text-align: center;
}

.check input {
  appearance: none;
  width: 18px;
  height: 18px;
  margin: 0;
  border: 1px solid #999;
  background: #fff;
}

.selected td {
  border-bottom-color: #afd0c0;
  background: #afd0c0;
  color: #55705f;
}

.selected .focus {
  background: #fff;
  color: #333;
}

.scrollbar {
  display: flex;
  flex-direction: column;
  width: 19px;
  background: #efefef;
}

.scrollbar button {
  height: 20px;
  border: 1px solid #b4b4b4;
  border-right: none;
  background: #fff;
}

.scroll-up::before,
.scroll-down::before {
  content: '';
  display: block;
  width: 0;
  margin: 0 auto;
  border: 4px solid transparent;
}

.scroll-up::before {
  border-bottom: 6px solid #888;
  border-top: none;
}

.scroll-down::before {
  border-top: 6px solid #888;
  border-bottom: none;
}

.thumb {
  height: 30px;
  margin: 163px 0 auto;
  border: 1px solid #b4b4b4;
  border-right: none;
  background: #fff;
}

.totals {
  display: flex;
  align-items: center;
  justify-content: flex-end;
  gap: 13px;
  height: 21px;
  padding-right: 17px;
  font-family: 'Liberation Sans', Arial, sans-serif;
  color: #666;
}

.total-time {
  margin-left: 15px;
}

/* 3D view */
.graphics {
  display: flex;
  flex-direction: column;
  flex: 1;
  min-height: 0;
  position: relative;
  margin-top: 3px;
}

.viewer {
  flex: 1;
  min-height: 0;
  margin-left: 1px;
  position: relative;
  background: linear-gradient(#89b1e9, #fff);
}

.dimensions {
  position: absolute;
  display: flex;
  gap: 11px;
  line-height: 18px;
  font-size: 11px;
  color: #14233c;
}

.scene {
  display: block;
  width: 100%;
}

/* keep beam widths independent of the drawing scale */
.scene defs path,
.sim-view defs path,
.roof path,
.machine path,
.machine ellipse {
  vector-effect: non-scaling-stroke;
}

.roof path,
.roof use {
  fill: none;
}

.dark {
  stroke: #908825;
}

.light {
  stroke: #c6b941;
}

.red {
  stroke: #cf1118;
  stroke-width: 7px;
  stroke-linecap: round;
}

.ticks {
  stroke: #e08a50;
}

.w1 { stroke-width: 1px; }
.w2 { stroke-width: 2px; }
.w3 { stroke-width: 3px; }
.w4 { stroke-width: 4px; }
.w5 { stroke-width: 5px; }
.w6 { stroke-width: 6px; }
.w7 { stroke-width: 7px; }
.w8 { stroke-width: 8px; }

/* floating simulation window */
.simulation {
  position: absolute;
  right: 0;
  bottom: 0;
  width: 815px;
  height: 380px;
  border-top: 2px solid #4a9cc4;
  border-left: 1px solid #4a9cc4;
  background: #808080;
}

.sim-title {
  display: flex;
  align-items: center;
  gap: 16px;
  height: 36px;
  padding: 0 16px 0 9px;
  background: #f8f8f8;
}

.sim-title h2 {
  margin-right: auto;
  font-size: 17px;
  color: #1878b4;
}

.sim-title svg {
  display: block;
  width: 10px;
  height: 10px;
  fill: none;
  stroke: #333;
}

.sim-view {
  display: block;
  width: 100%;
}

.steel,
.steel-dark,
.silver,
.roller,
.roll-dark {
  fill: none;
}

.steel {
  stroke: #2b88e2;
}

.steel-dark {
  stroke: #1a5590;
}

.silver {
  stroke: #cdd0da;
}

.roll-dark {
  stroke: #1f3c5c;
  stroke-width: 5px;
}

.roller {
  stroke: #efd489;
  stroke-width: 8px;
}

.red-steel {
  fill: #c40d12;
}

.view-cube text {
  font-family: 'Liberation Sans', Arial, sans-serif;
  font-size: 11px;
  text-anchor: middle;
  fill: #222;
}

.view-cube .top {
  font-size: 14px;
}

.view-icon {
  fill: #e4e4e4;
  stroke: #5a5a5a;
}
```
FILE: roof.js
```js
const rafters = document.getElementById('rafters');
const svgNs = 'http://www.w3.org/2000/svg';

// draws a row of parallel rafters inside one roof face
function addFace(clip, count, x, y, stepX, stepY, dx, dy, width, core) {
  let d = '';
  for (let i = 0; i < count; i++) {
    d += 'M' + (x + i * stepX) + ' ' + (y + i * stepY) + 'l' + dx + ' ' + dy;
  }
  const face = document.createElementNS(svgNs, 'g');
  face.setAttribute('clip-path', 'url(#' + clip + ')');
  [['dark', width], ['light', core]].forEach(function (layer) {
    const path = document.createElementNS(svgNs, 'path');
    path.setAttribute('d', d);
    path.setAttribute('class', layer[0] + ' w' + layer[1]);
    face.appendChild(path);
  });
  rafters.appendChild(face);
}

addFace('north', 28, 437, 55, 36.7, 11.5, -116, 290, 3, 1);
addFace('south', 26, 257, 720, 36.7, 11.5, 120, -500, 3, 2);
addFace('dormer', 16, 658, 950, 37.2, 11.6, 120, -533, 3, 2);
addFace('east', 18, 1452, 410, -11.4, 40.5, -500, -360, 4, 3);
```
